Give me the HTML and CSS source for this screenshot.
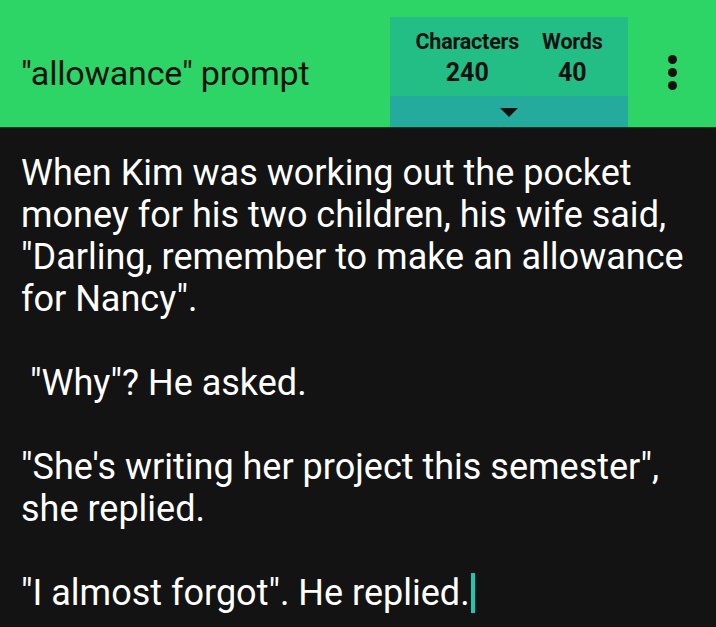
FILE: index.html
```html
<!DOCTYPE html>
<html>
<head>
<meta charset="utf-8">
<link rel="stylesheet" href="styles.css">
</head>
<body>
<header class="bar">
  <div class="title">"allowance" prompt</div>
  <div class="stats">
    <div class="counts">
      <div class="col">
        <div class="label">Characters</div>
        <div class="num">240</div>
      </div>
      <div class="col">
        <div class="label">Words</div>
        <div class="num">40</div>
      </div>
    </div>
    <div class="toggle"><span class="tri"></span></div>
  </div>
  <div class="menu"><span></span><span></span><span></span></div>
</header>
<main class="editor">
  <p>When Kim was working out the pocket money for his two children, his wife said, "Darling, remember to make an allowance for Nancy".</p>
  <p>&nbsp;"Why"? He asked.</p>
  <p>"She's writing her project this semester", she replied.</p>
  <p>"I almost forgot". He replied.<span class="caret"></span></p>
</main>
</body>
</html>
```

FILE: styles.css
```css
html, body {
  margin: 0;
  padding: 0;
  background: #131313;
  font-family: Roboto, "Noto Sans", sans-serif;
}
.bar {
  height: 127px;
  background: #2cd566;
  display: flex;
  align-items: flex-end;
  border-bottom: 1px solid #0e3a20;
}
.title {
  flex: 1;
  align-self: center;
  padding-left: 21px;
  padding-top: 18px;
  font-size: 34px;
  letter-spacing: -0.2px;
  color: #111;
}
.stats {
  width: 238px;
  height: 110px;
  display: flex;
  flex-direction: column;
  background: #22be86;
}
.counts {
  flex: 1;
  display: flex;
  justify-content: center;
  gap: 23px;
  padding-top: 11px;
  box-sizing: border-box;
}
.col {
  display: flex;
  flex-direction: column;
  align-items: center;
}
.label {
  font-size: 21.5px;
  font-weight: 700;
  color: #111;
  letter-spacing: -0.2px;
  line-height: 27px;
}
.num {
  font-size: 25px;
  font-weight: 700;
  color: #111;
  line-height: 32px;
  margin-top: 2px;
}
.toggle {
  height: 31px;
  background: #25ab9d;
  display: flex;
  justify-content: center;
  align-items: center;
}
.tri {
  width: 0;
  height: 0;
  border-left: 9px solid transparent;
  border-right: 9px solid transparent;
  border-top: 9px solid #111;
  margin-top: 1px;
}
.menu {
  width: 88px;
  align-self: center;
  padding-top: 18px;
  display: flex;
  flex-direction: column;
  align-items: center;
  gap: 4px;
}
.menu span {
  width: 9px;
  height: 9px;
  border-radius: 50%;
  background: #111;
}
.editor {
  padding: 24px 2px 0 21px;
  color: #fff;
  font-size: 36px;
  line-height: 42px;
}
.editor p {
  margin: 0 0 42px;
}
.caret {
  display: inline-block;
  width: 4px;
  height: 40px;
  background: #1ec8b0;
  vertical-align: -8px;
  margin-left: 1px;
}
```
